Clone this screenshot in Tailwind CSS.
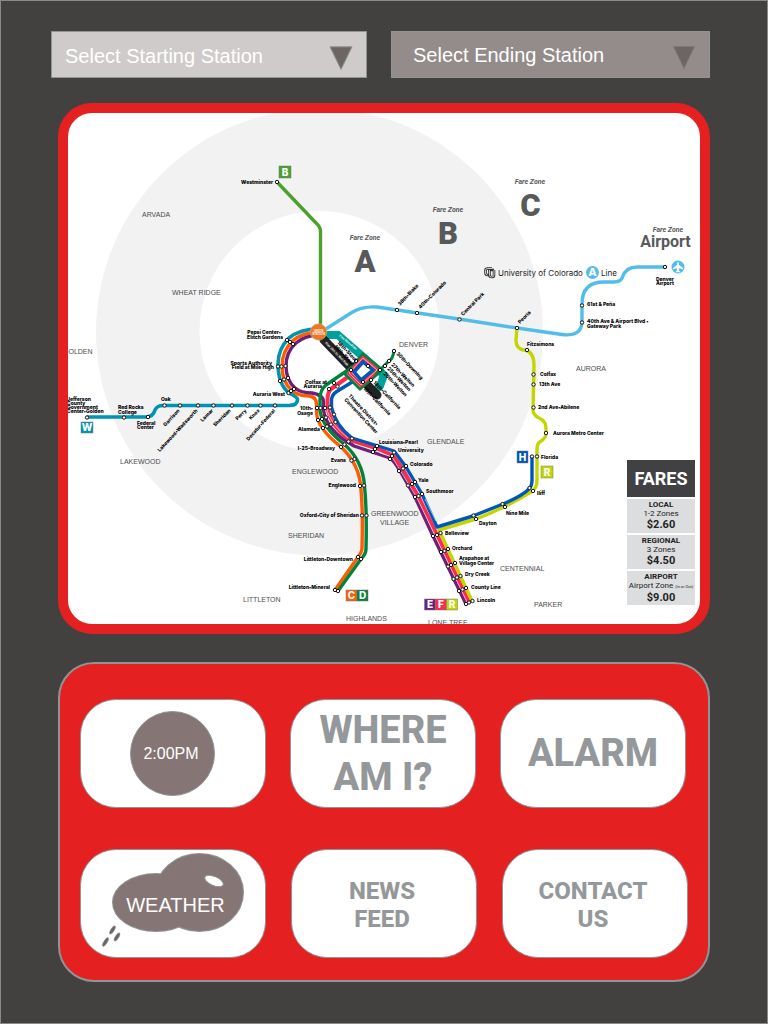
<!DOCTYPE html>
<html lang="en">
<head>
<meta charset="utf-8">
<meta name="viewport" content="width=device-width, initial-scale=1">
<title>Transit Kiosk</title>
<script src="https://cdn.jsdelivr.net/npm/@tailwindcss/browser@4"></script>
</head>
<body class="[font-family:'Liberation_Sans',sans-serif]">
<main class="flex min-h-screen flex-col border border-[#858b8d] bg-[#43413f] pt-[30px] pb-10">

  <form class="flex gap-6 pl-[50px] pr-[57px]">
    <div class="relative h-[47px] flex-[316]">
      <select id="start" aria-label="Starting station" class="h-full w-full appearance-none border border-[#8f9495] bg-[#cfcbca] pl-[13px] pr-10 pt-[3px] text-[20px] text-white"><option>Select Starting Station</option></select>
      <svg class="pointer-events-none absolute right-3.5 top-[15px] h-6 w-6" viewBox="0 0 24 24"><path d="M1 .8H23L12 23.500Z" fill="#6c6564" stroke="#8f9495"/></svg>
    </div>
    <div class="relative h-[47px] flex-[319]">
      <select id="end" aria-label="Ending station" class="h-full w-full appearance-none border border-[#8f9495] bg-[#938c8b] pl-[21px] pr-10 pt-[1px] text-[20px] text-white"><option>Select Ending Station</option></select>
      <svg class="pointer-events-none absolute right-3.5 top-[15px] h-6 w-6" viewBox="0 0 24 24"><path d="M1.500.5H22.500L12 22.500Z" fill="#6c6564" stroke="#7d7978"/></svg>
    </div>
  </form>

  <section aria-label="System map" class="relative mx-[57px] mt-[25px] overflow-hidden rounded-[34px] border-[10px] border-[#e42021] bg-white">
    <svg class="block h-auto w-full" viewBox="68 113 632 511" role="img" aria-label="Rail map">
      <defs>
        <circle id="s" r="1.7" fill="#fff" stroke="#111" stroke-width="1"/>
      </defs>
      <circle cx="319.500" cy="332" r="223.500" fill="#f2f2f3"/>
      <circle cx="319.500" cy="331" r="120" fill="#fff"/>

      <!-- rail lines -->
      <g fill="none" stroke-width="3.400" stroke-linejoin="round">
        <path d="M277 182L317 224Q320.500 227 320.500 232V330" stroke="#4ba12c"/>
        <path d="M318 334L351 313Q362 306 377 307L397 310L459 319L517 328L562 334.500Q582 337 582 321V304Q582 282 604 282H614Q621 282 622.500 277Q626 267 637 267H665" stroke="#52bde8"/>
        <path d="M517 328L516 340Q516 349 524 350Q534 351 534 366L533 410Q533 415 539 418Q546 421 546 428V433Q546 438 541 441Q537 443 537 449V480Q537 489 531 492Q505 508 476 519L439 530L472 601" stroke="#c4d600"/>
        <path d="M318 329Q300 329 289 338Q278 349 278 364Q278 384 289 393Q298 397 297.500 400Q297 405.500 289 405.500H163Q157 405.500 155 410Q153 417 146 417H87" stroke="#0093b2" stroke-width="3.600"/>
        <path d="M318 332Q302 333 293 340.500Q282 351 282 366Q282 382 292 390.500Q298 396 309 396Q316.500 397 316.500 404V412Q317 428 340 446Q360 464 361 490Q363 510 362 548Q362 552 358 557L335 590" stroke="#ff5c00"/>
        <path d="M318 335Q304 336 296 343Q286 352 286 366Q286 380 295 388Q301 393 312 393Q323.500 395 323.500 402V410Q326 428 346 441L354 446L390 458Q394 461 400 471L415 497L433 536L466 604" stroke="#6c2077"/>
        <path d="M348 370L326 385Q320 390 320 399V411Q323 428 344 444Q363 461 364.500 486Q367 510 366 549Q366 554 361 559L338 591" stroke="#00843d"/>
        <path d="M352 374L331 389Q327.500 392 327.500 400V408Q331 426 350 440L376 448L392 455Q396 459 402 468L418 496L437 535L469 603" stroke="#fb2c4e" stroke-width="4"/>
        <path d="M357 379L336 392Q331.500 395 331.500 401V407Q335 425 352 438L378 446L394 451Q398 456 406 467L422 494L437 527L473 516L503 504Q522 496 529 489Q532 486 532 480V456" stroke="#0057b8"/>
        <path d="M326 407Q330 424 348 438M380 453L392 457L417 498L467 602M425 499L436 521" stroke="#fff" stroke-width=".6"/>
      </g>

      <!-- downtown -->
      <g fill="none">
        <path d="M326 335H338L376 368L384 375L380 386L371 394" stroke="#00a19a" stroke-width="8"/>
        <path d="M324 340L377 395" stroke="#222" stroke-width="9" stroke-linecap="round"/>
        <path d="M345 374L363 354L382 370L360 389Z" fill="#fff" stroke="#00843d" stroke-width="3"/>
        <path d="M349 373L363 358L377 370L361 385Z" stroke="#fb2c4e" stroke-width="4"/>
        <path d="M349 373L363 358L377 370L361 385Z" stroke="#fff" stroke-width=".6"/>
        <path d="M354 372L363 362L373 370L361 380Z" stroke="#0057b8" stroke-width="3.500"/>
        <path d="M394 351Q393 359 388 362L376 374" stroke="#00843d" stroke-width="3"/>
      </g>
      <circle cx="318.500" cy="332" r="8.300" fill="#ef7623" stroke="#b9c7ba" stroke-width=".5"/>

      <!-- stations -->
      <g>
        <use href="#s" x="277" y="182"/><use href="#s" x="397" y="310"/><use href="#s" x="417" y="313"/><use href="#s" x="459.500" y="319.500"/><use href="#s" x="517" y="328"/><use href="#s" x="582" y="322.500"/><use href="#s" x="582" y="305.500"/><use href="#s" x="665" y="267"/>
        <use href="#s" x="527" y="350"/><use href="#s" x="533.500" y="374.500"/><use href="#s" x="533.500" y="384.500"/><use href="#s" x="533.500" y="407.500"/><use href="#s" x="546" y="433"/><use href="#s" x="532" y="456.500"/><use href="#s" x="537" y="456.500"/><use href="#s" x="529.500" y="488"/><use href="#s" x="533" y="491"/><use href="#s" x="502.500" y="504"/><use href="#s" x="505" y="507"/><use href="#s" x="473.500" y="515.500"/><use href="#s" x="476" y="519"/>
        <use href="#s" x="87" y="417.500"/><use href="#s" x="124" y="417.500"/><use href="#s" x="148" y="417"/><use href="#s" x="164.500" y="405.500"/><use href="#s" x="180" y="405.500"/><use href="#s" x="198" y="405.500"/><use href="#s" x="213.500" y="405.500"/><use href="#s" x="232" y="405.500"/><use href="#s" x="247.500" y="405.500"/><use href="#s" x="260.500" y="405.500"/><use href="#s" x="275" y="405.500"/>
        <use href="#s" x="287" y="340"/><use href="#s" x="290" y="342"/><use href="#s" x="293" y="344"/><use href="#s" x="278" y="366.500"/><use href="#s" x="281.500" y="366.500"/><use href="#s" x="285.500" y="366"/><use href="#s" x="280" y="381"/><use href="#s" x="284" y="379.500"/><use href="#s" x="288" y="378"/><use href="#s" x="288.500" y="393"/><use href="#s" x="291" y="391"/><use href="#s" x="294" y="389"/>
        <use href="#s" x="317" y="408"/><use href="#s" x="320.500" y="408"/><use href="#s" x="325" y="408"/><use href="#s" x="330" y="407.500"/><use href="#s" x="318" y="420"/><use href="#s" x="322" y="419"/><use href="#s" x="326" y="417.500"/><use href="#s" x="334" y="414.500"/><use href="#s" x="323" y="428"/><use href="#s" x="327" y="426.500"/><use href="#s" x="331" y="424.500"/><use href="#s" x="335.500" y="422"/><use href="#s" x="329" y="389"/><use href="#s" x="334" y="383"/><use href="#s" x="337.500" y="386.500"/>
        <use href="#s" x="341" y="447"/><use href="#s" x="344.500" y="444.500"/><use href="#s" x="348.500" y="441.500"/><use href="#s" x="352" y="438.500"/><use href="#s" x="351.500" y="460.500"/><use href="#s" x="354.500" y="459"/><use href="#s" x="360" y="486"/><use href="#s" x="364" y="485.500"/><use href="#s" x="362" y="515.500"/><use href="#s" x="366.500" y="515.500"/><use href="#s" x="358" y="557"/><use href="#s" x="361" y="559"/><use href="#s" x="335" y="590"/><use href="#s" x="338" y="591"/>
        <use href="#s" x="373" y="452"/><use href="#s" x="375" y="449"/><use href="#s" x="377" y="446"/><use href="#s" x="390" y="459"/><use href="#s" x="392" y="456"/><use href="#s" x="394" y="452.500"/><use href="#s" x="399" y="471"/><use href="#s" x="403" y="468.500"/><use href="#s" x="406" y="466"/><use href="#s" x="408" y="485.500"/><use href="#s" x="412" y="484"/><use href="#s" x="415" y="482"/><use href="#s" x="415" y="497"/><use href="#s" x="418.500" y="496"/><use href="#s" x="422" y="494"/>
        <use href="#s" x="433" y="536"/><use href="#s" x="437" y="535"/><use href="#s" x="440.500" y="533"/><use href="#s" x="441" y="552"/><use href="#s" x="444.500" y="551"/><use href="#s" x="448" y="549"/><use href="#s" x="448" y="566.500"/><use href="#s" x="451" y="565"/><use href="#s" x="455" y="563"/><use href="#s" x="453.500" y="579"/><use href="#s" x="457" y="577.500"/><use href="#s" x="460.500" y="576"/><use href="#s" x="459" y="591"/><use href="#s" x="462.500" y="589.500"/><use href="#s" x="466" y="588"/><use href="#s" x="466" y="604"/><use href="#s" x="469" y="602.500"/><use href="#s" x="472.500" y="601"/>
        <use href="#s" x="394" y="351"/><use href="#s" x="389" y="361"/><use href="#s" x="385" y="366"/><use href="#s" x="380" y="370"/><use href="#s" x="356" y="361"/><use href="#s" x="351" y="370"/><use href="#s" x="368" y="366"/><use href="#s" x="363" y="382"/><use href="#s" x="371" y="380"/>
      </g>

      <!-- station names -->
      <g class="fill-black text-[5px] font-extrabold [font-family:Inter,sans-serif]">
        <g text-anchor="end">
          <text x="273" y="183.500">Westminster</text>
          <text x="281" y="334">Pepsi Center•</text><text x="283" y="339">Elitch Gardens</text>
          <text x="272" y="364.500">Sports Authority</text><text x="274" y="369">Field at Mile High</text>
          <text x="285" y="395.500">Auraria West</text>
          <text x="327" y="383.500">Colfax at</text><text x="322" y="388">Auraria</text>
          <text x="313" y="410">10th•</text><text x="313" y="414.500">Osage</text>
          <text x="320" y="431">Alameda</text><text x="335" y="450">I-25•Broadway</text>
          <text x="346" y="462">Evans</text><text x="356" y="487">Englewood</text>
          <text x="359" y="517">Oxford•City of Sheridan</text>
          <text x="353" y="561">Littleton•Downtown</text><text x="330" y="589">Littleton•Mineral</text>
        </g>
        <text x="67" y="400.500">Jefferson</text><text x="67" y="405">County</text><text x="67" y="409">Government</text><text x="67" y="413">Center•Golden</text>
        <text x="118" y="409">Red Rocks</text><text x="118" y="413.500">College</text>
        <text x="161" y="401">Oak</text><text x="137" y="425">Federal</text><text x="137" y="429">Center</text>
        <text x="379" y="443.500">Louisiana•Pearl</text><text x="398" y="451.500">University</text><text x="410" y="465.500">Colorado</text><text x="418" y="481.500">Yale</text><text x="426" y="493">Southmoor</text>
        <text x="445" y="535">Belleview</text><text x="452" y="550">Orchard</text><text x="459" y="560">Arapahoe at</text><text x="459" y="565">Village Center</text><text x="465" y="575.500">Dry Creek</text><text x="471" y="589">County Line</text><text x="477" y="601.500">Lincoln</text>
        <text x="479" y="525">Dayton</text><text x="506" y="514.500">Nine Mile</text><text x="537" y="495">Iliff</text><text x="541" y="458.500">Florida</text><text x="553" y="435">Aurora Metro Center</text><text x="538" y="409">2nd Ave•Abilene</text><text x="539" y="386">13th Ave</text><text x="540" y="376">Colfax</text><text x="527" y="345.500">Fitzsimons</text>
        <text x="587" y="306">61st &amp; Peña</text><text x="587" y="323">40th Ave &amp; Airport Blvd •</text><text x="587" y="328">Gateway Park</text>
        <text x="656" y="280.500">Denver</text><text x="656" y="284.500">Airport</text>
        <text transform="translate(400 306) rotate(-47)">38th•Blake</text>
        <text transform="translate(420.500 309) rotate(-45)">40th•Colorado</text>
        <text transform="translate(463 316) rotate(-45)">Central Park</text>
        <text transform="translate(520 324) rotate(-45)">Peoria</text>
        <g text-anchor="end">
          <text transform="translate(180 411) rotate(-47)">Garrison</text>
          <text transform="translate(198 411) rotate(-47)">Lakewood•Wadsworth</text>
          <text transform="translate(213.500 411) rotate(-45)">Lamar</text>
          <text transform="translate(231 411) rotate(-45)">Sheridan</text>
          <text transform="translate(247 411) rotate(-45)">Perry</text>
          <text transform="translate(260 411) rotate(-45)">Knox</text>
          <text transform="translate(275.500 411) rotate(-48)">Decatur•Federal</text>
        </g>
        <text transform="translate(396 354) rotate(46)">30th•Downing</text>
        <text transform="translate(391 365) rotate(46)">27th•Welton</text>
        <text transform="translate(387 369) rotate(46)">25th•Welton</text>
        <text transform="translate(383 374) rotate(46)">20th•Welton</text>
        <text transform="translate(373 383) rotate(46)">18th•California</text>
        <text transform="translate(363 389) rotate(46)">16th•California</text>
        <text transform="translate(348 396) rotate(47)">Theatre District•</text>
        <text transform="translate(344 400) rotate(47)">Convention Center</text>
        <text transform="translate(337 343) rotate(46)">18th•Stout</text>
        <text transform="translate(334 347) rotate(46)">16th•Stout</text>
      </g>
      <g class="fill-white text-[3px] font-bold">
        <text transform="translate(339 336) rotate(40)">Free MetroRide</text>
        <text transform="translate(325 343) rotate(46)">Free 16th St. Mall Ride</text>
        <text x="318.500" y="331.500" text-anchor="middle">UNION</text><text x="318.500" y="335" text-anchor="middle">STATION</text>
      </g>

      <!-- cities -->
      <g class="fill-[#4c4c4e] text-[7px]">
        <text x="142" y="217">ARVADA</text><text x="172" y="295">WHEAT RIDGE</text><text x="63" y="353.500">GOLDEN</text><text x="399" y="347">DENVER</text><text x="576" y="370.500">AURORA</text><text x="427" y="443.500">GLENDALE</text><text x="120" y="463.500">LAKEWOOD</text><text x="292" y="474">ENGLEWOOD</text><text x="371" y="515.500">GREENWOOD</text><text x="380" y="524.500">VILLAGE</text><text x="288" y="537.500">SHERIDAN</text><text x="243" y="601.500">LITTLETON</text><text x="346" y="620.500">HIGHLANDS</text><text x="428" y="625">LONE TREE</text><text x="500" y="571">CENTENNIAL</text><text x="534" y="606.500">PARKER</text>
      </g>

      <!-- fare zones -->
      <g class="fill-[#58595b] font-bold [font-family:Roboto,sans-serif]" text-anchor="middle">
        <g class="text-[7px] italic"><text x="365" y="240">Fare Zone</text><text x="448" y="212">Fare Zone</text><text x="530" y="184">Fare Zone</text><text x="668" y="231.500">Fare Zone</text></g>
        <g class="text-[31px] font-black"><text x="365" y="272">A</text><text x="448" y="244">B</text><text x="530.500" y="216">C</text></g>
        <text x="665.500" y="247" class="text-[16px]">Airport</text>
      </g>
      <g class="fill-[#222] text-[8px] [font-family:Inter,sans-serif]"><text x="498" y="275.500">University of Colorado</text><text x="601" y="275.500">Line</text></g>
      <g fill="none" stroke-linejoin="round"><path d="M492 268.500H487.500Q485.500 268.500 485.500 270.500V273Q485.500 275 487.500 275H490M488 270H494M489.500 270V275.500Q489.500 277 491.500 277H492.500Q494 277 494 275V270" stroke="#333" stroke-width="2.600"/><path d="M492 268.500H487.500Q485.500 268.500 485.500 270.500V273Q485.500 275 487.500 275M489.500 270V275.500Q489.500 277 491.500 277Q494 277 494 275V270" stroke="#ccc" stroke-width="1"/></g>
      <circle cx="592.500" cy="272.500" r="6.500" fill="#52bde8"/>
      <circle cx="678" cy="267" r="6.500" fill="#52bde8"/>
      <path d="M678 261.800Q679 262 679 265L683 268V269.300L679 268.200L678.800 270.500L680.300 271.800V272.600L678 272L675.700 272.600V271.800L677.200 270.500L677 268.200L673 269.300V268L677 265Q677 262 678 261.800Z" fill="#fff"/>

      <!-- line badges -->
      <g stroke="#777" stroke-width=".5">
        <rect x="279" y="166" width="12" height="12" fill="#4ba12c"/><rect x="81" y="422" width="12" height="11" fill="#0093b2"/><rect x="517" y="451" width="11" height="12" fill="#0057b8"/><rect x="541" y="466" width="12" height="12" fill="#c4d600"/>
        <rect x="346" y="590" width="11" height="11" fill="#ff5c00"/><rect x="357" y="590" width="11" height="11" fill="#00843d"/>
        <rect x="424.500" y="599" width="11" height="11" fill="#6c2077"/><rect x="435.500" y="599" width="11" height="11" fill="#fb2c4e"/><rect x="446.500" y="599" width="11" height="11" fill="#c4d600"/>
      </g>
      <g class="fill-white text-[10px] font-extrabold [font-family:Inter,sans-serif]" text-anchor="middle">
        <text x="285" y="175.500">B</text><text x="87" y="431">W</text><text x="522.500" y="460.500">H</text><text x="547" y="475.500">R</text><text x="351.500" y="599">C</text><text x="362.500" y="599">D</text><text x="430" y="608">E</text><text x="441" y="608">F</text><text x="452" y="608">R</text>
        <text x="592.500" y="276" class="text-[11px]">A</text>
      </g>
    </svg>

    <table class="absolute bottom-[17px] right-[5px] w-[68px] border-separate border-spacing-x-0 border-spacing-y-[2px] text-center text-[#222] [font-family:Roboto,sans-serif]">
      <thead><tr><th class="h-[37px] bg-[#414042] p-0 text-[18px] font-bold text-white">FARES</th></tr></thead>
      <tbody class="text-[8px] leading-[9px]">
        <tr><td class="h-[34px] bg-[#dcddde] p-0"><b>LOCAL</b><br>1-2 Zones<br><b class="text-[11px] leading-[14px]">$2.60</b></td></tr>
        <tr><td class="h-[34px] bg-[#dcddde] p-0"><b>REGIONAL</b><br>3 Zones<br><b class="text-[11px] leading-[14px]">$4.50</b></td></tr>
        <tr><td class="h-[34px] whitespace-nowrap bg-[#dcddde] p-0"><b>AIRPORT</b><br>Airport Zone <span class="text-[4px]">(In or Out)</span><br><b class="text-[11px] leading-[14px]">$9.00</b></td></tr>
      </tbody>
    </table>
  </section>

  <nav aria-label="Tools" class="mx-[57px] mt-7 flex flex-col gap-[41px] rounded-[36px] border-2 border-[#8f9495] bg-[#e42021] px-5 pb-[22px] pt-[35px] font-bold text-[#94989b] [font-family:Roboto,sans-serif]">
    <div class="grid grid-cols-3 gap-6 pr-0.5">
      <button type="button" class="flex h-[109px] items-center justify-center rounded-[36px] border border-[#8f9495] bg-white pr-0.5"><span class="flex size-[85px] items-center justify-center rounded-full border border-[#8f9495] bg-[#857675] pr-0.5 text-[16px] font-normal text-white [font-family:'Liberation_Sans',sans-serif]">2:00PM</span></button>
      <button type="button" class="h-[109px] rounded-[36px] border border-[#8f9495] bg-white text-[38px] leading-[47px] font-extrabold">WHERE<br>AM I?</button>
      <button type="button" class="h-[109px] rounded-[36px] border border-[#8f9495] bg-white text-[38px] leading-[47px] font-extrabold">ALARM</button>
    </div>
    <div class="grid grid-cols-3 gap-[25px]">
      <button type="button" class="h-[109px] rounded-[36px] border border-[#8f9495] bg-white">
        <svg class="h-full w-full" viewBox="81 851 184 107">
          <g stroke="#8f9495" stroke-width="2" fill="#857675"><ellipse cx="156" cy="903.500" rx="43" ry="28.500"/><ellipse cx="199.500" cy="893.500" rx="43.500" ry="38.500"/></g>
          <ellipse cx="156" cy="903.500" rx="43" ry="28.500" fill="#857675"/><ellipse cx="199.500" cy="893.500" rx="43.500" ry="38.500" fill="#857675"/>
          <ellipse cx="214" cy="882" rx="10" ry="4.500" fill="#fff" stroke="#8f9495" transform="rotate(24 214 882)"/>
          <g fill="#6c6564" stroke="#8f9495" stroke-width=".5"><ellipse cx="112.500" cy="931" rx="1.700" ry="4.800" transform="rotate(32 112.500 931)"/><ellipse cx="117" cy="938" rx="1.700" ry="4.800" transform="rotate(32 117 938)"/><ellipse cx="105.500" cy="943" rx="1.700" ry="5" transform="rotate(32 105.500 943)"/></g>
          <text x="175.500" y="913" text-anchor="middle" class="fill-white text-[20px] font-normal [font-family:'Liberation_Sans',sans-serif]">WEATHER</text>
        </svg>
      </button>
      <button type="button" class="h-[109px] rounded-[36px] border border-[#8f9495] bg-white pr-1 pt-0.5 text-[24px] leading-7 font-extrabold">NEWS<br>FEED</button>
      <button type="button" class="h-[109px] rounded-[36px] border border-[#8f9495] bg-white pr-1 pt-0.5 text-[24px] leading-7 font-extrabold">CONTACT<br>US</button>
    </div>
  </nav>
</main>
</body>
</html>
